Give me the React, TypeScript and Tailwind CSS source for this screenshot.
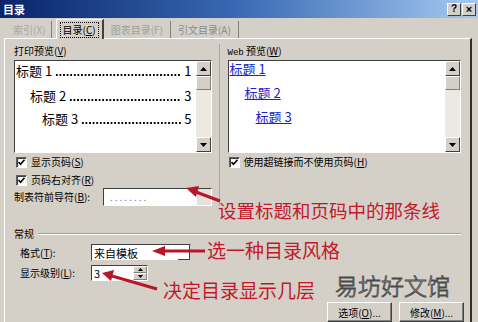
import React from 'react';

const font = "font-['SimSun','Noto_Sans_CJK_SC',sans-serif]";

const Check = ({ label, k }: { label: string; k: string }) => (
  <div className="flex items-center h-[14px] gap-[4px] text-[10px] leading-[14px] text-black whitespace-nowrap">
    <div className="w-[11px] h-[11px] bg-white border border-t-[#606060] border-l-[#606060] border-b-white border-r-white shadow-[inset_1px_1px_0_#404040] flex items-center justify-center">
      <svg width="9" height="9" viewBox="0 0 9 9">
        <path d="M1.5 4 L3.5 6.2 L7.5 1.8" stroke="#000" strokeWidth="1.6" fill="none" />
      </svg>
    </div>
    <span>
      {label}(<span className="underline">{k}</span>)
    </span>
  </div>
);

const Arrow = ({ down }: { down?: boolean }) => (
  <div className="h-[15px] w-[15px] bg-[#d4d0c8] border border-t-white border-l-white border-b-[#404040] border-r-[#404040] flex items-center justify-center">
    <svg width="7" height="4" viewBox="0 0 7 4">
      <path d={down ? 'M0 0 H7 L3.5 4 Z' : 'M0 4 H7 L3.5 0 Z'} fill="#000" />
    </svg>
  </div>
);

const Scrollbar = () => (
  <div className="w-[15px] h-full flex flex-col bg-[#ece9e3]">
    <Arrow />
    <div className="h-[14px] bg-[#d4d0c8] border border-t-white border-l-white border-b-[#808080] border-r-[#808080]" />
    <div className="flex-1" />
    <Arrow down />
  </div>
);

// leader dots drawn as a repeating dot pattern
const TocLine = ({ title, page, cls }: { title: string; page: string; cls: string }) => (
  <div className={`flex items-center h-[16px] text-[13px] leading-[16px] text-black ${cls}`}>
    <span className="whitespace-nowrap">{title}</span>
    <span className="flex-1 min-w-0 self-end mb-[3px] mx-[3px] h-[2px] bg-[radial-gradient(circle,#000_0.7px,transparent_1.1px)] bg-[length:3.6px_2px] bg-repeat-x" />
    <span className="pr-[4px]">{page}</span>
  </div>
);

const Button = ({ label, k }: { label: string; k: string }) => (
  <div className="w-[65px] h-[20px] bg-[#d4d0c8] border border-t-white border-l-white border-b-[#404040] border-r-[#404040] shadow-[inset_-1px_-1px_0_#808080] flex items-center justify-center text-[10px] text-black whitespace-nowrap">
    {label}(<span className="underline">{k}</span>)...
  </div>
);

export default function App() {
  return (
    <div className={`relative w-[478px] h-[322px] overflow-hidden bg-[#d4d0c8] ${font}`}>
      {/* title bar */}
      <div className="h-[18px] flex items-center justify-between pl-[3px] pr-[2px] bg-gradient-to-r from-[#0a246a] via-[#3a6ab4] to-[#a6caf0]">
        <span className="text-white font-bold text-[11px] leading-[16px]">目录</span>
        <div className="flex gap-[1px]">
          <div className="w-[14px] h-[13px] bg-[#d4d0c8] border border-t-white border-l-white border-b-[#404040] border-r-[#404040] flex items-center justify-center text-[10px] font-bold leading-none text-black font-['Liberation_Sans',sans-serif]">?</div>
          <div className="w-[14px] h-[13px] bg-[#d4d0c8] border border-t-white border-l-white border-b-[#404040] border-r-[#404040] flex items-center justify-center text-[11px] font-bold leading-none text-black font-['Liberation_Sans',sans-serif]">×</div>
        </div>
      </div>

      {/* tabs */}
      <div className="h-[20px] flex items-end pl-[9px] text-[10px] leading-[14px]">
        <div className="h-[17px] pl-[4px] pr-[5px] flex items-center text-[#a8a8a8] border-r border-[#808080]">索引(X)</div>
        <div className="h-[20px] ml-[4px] px-[4px] flex items-center bg-[#d4d0c8] border-t border-l border-white border-r-2 border-r-[#404040] relative z-10 -mb-[1px]">
          <span className="outline outline-1 outline-dotted outline-black px-[2px]">目录(<span className="underline">C</span>)</span>
        </div>
        <div className="h-[17px] px-[7px] flex items-center text-[#a0a0a0] border-r border-[#808080]">图表目录(F)</div>
        <div className="h-[17px] px-[7px] flex items-center text-[#8a8a8a] border-r border-[#808080]">引文目录(A)</div>
      </div>

      {/* panel */}
      <div className="ml-[4px] mr-[6px] h-[284px] border-t border-l border-white border-r-2 border-r-[#303030] pl-[9px] pt-[5px] pr-[9px] flex flex-col">
        <div className="flex">
          {/* left column */}
          <div className="w-[198px] flex flex-col">
            <div className="h-[14px] text-[10px] leading-[14px]">打印预览(<span className="underline">V</span>)</div>
            <div className="mt-[2px] h-[93px] flex border border-t-[#404040] border-l-[#404040] border-b-white border-r-white">
              <div className="flex-1 min-w-0 bg-white pl-[1px] flex flex-col">
                <TocLine title="标题 1" page="1" cls="mt-[2px]" />
                <TocLine title="标题 2" page="3" cls="mt-[9px] pl-[14px]" />
                <TocLine title="标题 3" page="5" cls="mt-[7px] pl-[26px]" />
              </div>
              <Scrollbar />
            </div>
            <div className="mt-[2px] pl-[2px]">
              <Check label="显示页码" k="S" />
            </div>
            <div className="mt-[4px] pl-[2px]">
              <Check label="页码右对齐" k="R" />
            </div>
            <div className="mt-[1px] h-[18px] flex items-center text-[10px] leading-[14px]">
              <span className="w-[89px] whitespace-nowrap">制表符前导符(<span className="underline">B</span>):</span>
              <div className="flex-1 h-[18px] bg-white border border-t-[#404040] border-l-[#404040] border-b-white border-r-white flex items-center">
                <span className="flex-1 pl-[6px] text-[#777] tracking-[2px] text-[10px]">........</span>
                <div className="w-[14px] h-full bg-[#e4e2dc]" />
              </div>
            </div>
          </div>
          {/* divider */}
          <div className="w-[16px] flex justify-center">
            <div className="w-[1px] h-full bg-[#a8a6a0]" />
          </div>
          {/* right column */}
          <div className="w-[234px] flex flex-col">
            <div className="h-[14px] text-[10px] leading-[14px]">
              <span className="font-['Liberation_Mono',monospace] text-[9px]">Web</span> 预览(<span className="underline">W</span>)
            </div>
            <div className="mt-[2px] h-[93px] flex border border-t-[#404040] border-l-[#404040] border-b-white border-r-white">
              <div className="flex-1 bg-white pl-[1px] text-[13px] leading-[16px] text-[#1a22c8]">
                <div className="underline">标题 1</div>
                <div className="mt-[8px] pl-[15px] underline">标题 2</div>
                <div className="mt-[8px] pl-[26px] underline">标题 3</div>
              </div>
              <Scrollbar />
            </div>
            <div className="mt-[2px] pl-[1px]">
              <Check label="使用超链接而不使用页码" k="H" />
            </div>
          </div>
        </div>

        {/* group */}
        <div className="mt-[21px] h-[14px] flex items-center gap-[4px] text-[10px] leading-[14px]">
          <span>常规</span>
          <div className="flex-1 h-[2px] border-t border-[#a0a0a0] border-b border-b-white" />
        </div>
        <div className="mt-[3px] h-[17px] flex items-center text-[10px] leading-[14px] pl-[6px]">
          <span className="w-[71px] whitespace-nowrap">格式(<span className="underline">T</span>):</span>
          <div className="w-[100px] h-[17px] bg-white border border-t-[#404040] border-l-[#404040] border-b-[#d4d0c8] border-r-[#d4d0c8] flex items-center">
            <span className="flex-1 pl-[2px] text-[11px]">来自模板</span>
            <div className="w-[12px] h-full border-r border-b border-[#404040]" />
          </div>
        </div>
        <div className="mt-[4px] h-[16px] flex items-center text-[10px] leading-[14px] pl-[6px]">
          <span className="w-[71px] whitespace-nowrap">显示级别(<span className="underline">L</span>):</span>
          <div className="w-[57px] h-[16px] bg-white border border-t-[#404040] border-l-[#404040] border-b-white border-r-white flex items-center">
            <span className="flex-1 pl-[2px] text-[11px]">3</span>
            <div className="w-[14px] h-full flex flex-col bg-[#d4d0c8]">
              <div className="flex-1 flex items-center justify-center border border-t-white border-l-white border-b-[#808080] border-r-[#808080]">
                <svg width="5" height="3" viewBox="0 0 5 3"><path d="M0 3 H5 L2.5 0 Z" fill="#000" /></svg>
              </div>
              <div className="flex-1 flex items-center justify-center border border-t-white border-l-white border-b-[#808080] border-r-[#808080]">
                <svg width="5" height="3" viewBox="0 0 5 3"><path d="M0 0 H5 L2.5 3 Z" fill="#000" /></svg>
              </div>
            </div>
          </div>
        </div>
        <div className="mt-[21px] flex justify-end gap-[7px] mr-[-3px]">
          <Button label="选项" k="O" />
          <Button label="修改" k="M" />
        </div>
      </div>

      {/* annotations */}
      <div className="absolute left-[218px] top-[198px] text-[18.5px] leading-[24px] text-[#c2182a] font-['Noto_Sans_CJK_SC',sans-serif]">设置标题和页码中的那条线</div>
      <div className="absolute left-[207px] top-[238px] text-[19px] leading-[24px] text-[#c2182a] font-['Noto_Sans_CJK_SC',sans-serif]">选一种目录风格</div>
      <div className="absolute left-[163px] top-[278px] text-[19px] leading-[24px] text-[#c2182a] font-['Noto_Sans_CJK_SC',sans-serif]">决定目录显示几层</div>
      <div className="absolute left-[335px] top-[271px] text-[23px] leading-[28px] font-light text-white [-webkit-text-stroke:0.9px_#4a4a4a] font-['Noto_Sans_CJK_SC',sans-serif]">易坊好文馆</div>

      <svg className="absolute left-0 top-0 pointer-events-none" width="478" height="322">
        <g stroke="#b8162a" strokeWidth="3">
          <line x1="220" y1="201" x2="196" y2="192" />
          <line x1="205" y1="251" x2="164" y2="251" />
          <line x1="157" y1="289" x2="112" y2="276" />
        </g>
        <g fill="#b8162a">
          <polygon points="186,188 199,186 196,197" />
          <polygon points="152,251 165,246 165,256" />
          <polygon points="102,273 114,270 111,281" />
        </g>
      </svg>
    </div>
  );
}
